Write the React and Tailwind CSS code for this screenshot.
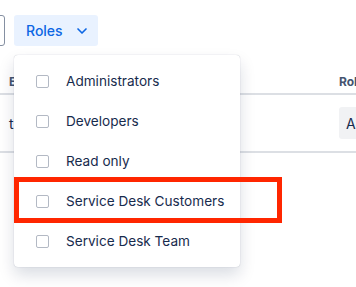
import React from 'react';
import { ChevronDown } from 'lucide-react';

const roles = ['Administrators', 'Developers', 'Read only', 'Service Desk Customers', 'Service Desk Team'];

const App = () => {
  return (
    <div
      className="relative w-[356px] h-[287px] overflow-hidden bg-white text-[#172b4d]"
      style={{ fontFamily: 'Inter, "Noto Sans", sans-serif' }}
    >
      {/* toolbar */}
      <div className="flex items-center gap-[9px] pt-[15px]">
        <div className="-ml-[190px] w-[195px] h-[31px] shrink-0 rounded-[3px] border border-[#8590a2] bg-white" />
        <button className="flex items-center gap-[11px] h-[31px] w-[84px] shrink-0 pl-[12px] rounded-[3px] bg-[#e9f2ff] text-[#0c66e4] text-[14px] font-medium">
          Roles
          <ChevronDown size={16} strokeWidth={2.5} />
        </button>
      </div>

      {/* table behind */}
      <div className="mt-[25px]">
        <div className="flex h-[24px] items-center border-b-2 border-[#dcdfe4] text-[12px] font-bold text-[#44546f]">
          <div className="w-[339px] shrink-0 pl-[9px]">Email</div>
          <div className="shrink-0">Role</div>
        </div>
        <div className="flex h-[58px] items-center border-b-2 border-[#dcdfe4] text-[14px]">
          <div className="w-[339px] shrink-0 pl-[9px]">t</div>
          <div className="h-[32px] shrink-0 pl-[7px] pr-[12px] flex items-center rounded-[3px] bg-[#f1f2f4]">Admin</div>
        </div>
      </div>

      {/* dropdown menu */}
      <div className="absolute left-[14px] top-[55px] w-[226px] py-[6px] rounded-[4px] bg-white shadow-[0_8px_16px_rgba(9,30,66,0.15),0_0_1px_rgba(9,30,66,0.31)]">
        {roles.map((r) => (
          <div key={r} className="flex items-center h-[40px] pl-[22px]">
            <span className="w-[13px] h-[13px] shrink-0 rounded-[2px] border-[1.5px] border-[#b3b9c4] bg-white" />
            <span className="ml-[17px] text-[13.6px]">{r}</span>
          </div>
        ))}
      </div>

      {/* highlight annotation */}
      <div className="absolute left-[14px] top-[177px] w-[268px] h-[46px] border-[5px] border-[#ff2600]" />
    </div>
  );
};

export default App;
